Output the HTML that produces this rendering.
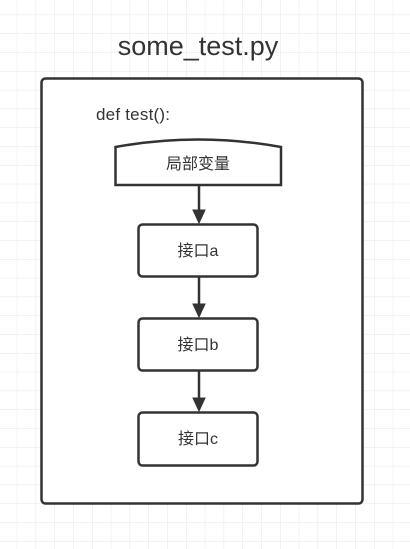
<!DOCTYPE html>
<html><head><style>
body{margin:0;width:410px;height:549px;overflow:hidden;background:#fff}
</style></head><body>
<svg width="410" height="549" xmlns="http://www.w3.org/2000/svg" style="display:block">
<defs>
<pattern id="g" x="-1.5" y="-3.7" width="18.8" height="18.8" patternUnits="userSpaceOnUse">
<path d="M18.8 0V18.8M0 18.8H18.8" stroke="#e6e6e6" stroke-width="1" fill="none"/>
</pattern>
</defs>
<rect width="410" height="549" fill="url(#g)"/>
<text x="198" y="55" text-anchor="middle" font-family="Liberation Sans, sans-serif" font-size="27" fill="#333">some_test.py</text>
<rect x="41.5" y="78.5" width="321" height="425" rx="4" fill="#fff" stroke="#333" stroke-width="2.5"/>
<text x="96" y="120" font-family="Liberation Sans, sans-serif" font-size="17" fill="#333" textLength="74">def test():</text>
<path d="M115.5 147 Q198 132 281 147 V185 H115.5 Z" fill="#fff" stroke="#333" stroke-width="2.5"/>
<text x="198" y="169" text-anchor="middle" font-family="Liberation Sans, 'Noto Sans CJK SC', sans-serif" font-size="16" fill="#333">局部变量</text>
<g stroke="#333" stroke-width="2.5" fill="#333">
<line x1="199" y1="185" x2="199" y2="212"/><path d="M193 210 L199 223 L205 210 Z" stroke-width="1"/>
<line x1="199" y1="277" x2="199" y2="306"/><path d="M193 304 L199 317 L205 304 Z" stroke-width="1"/>
<line x1="199" y1="371" x2="199" y2="400"/><path d="M193 398 L199 411 L205 398 Z" stroke-width="1"/>
</g>
<g fill="#fff" stroke="#333" stroke-width="2.5">
<rect x="138.5" y="224.5" width="119" height="52" rx="4"/>
<rect x="138.5" y="318.5" width="119" height="52" rx="4"/>
<rect x="138.5" y="412.5" width="119" height="53" rx="4"/>
</g>
<g font-family="Liberation Sans, 'Noto Sans CJK SC', sans-serif" font-size="16" fill="#333" text-anchor="middle">
<text x="198" y="256">接口a</text>
<text x="198" y="350">接口b</text>
<text x="198" y="444">接口c</text>
</g>
</svg>
</body></html>
